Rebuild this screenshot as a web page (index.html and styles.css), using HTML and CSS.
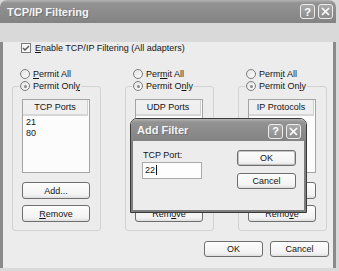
FILE: index.html
```html
<!DOCTYPE html>
<html>
<head>
    <title>TCP/IP Filtering</title>
    <link rel="stylesheet" href="styles.css">
</head>
<body>
    <div class="dlg">
        <div class="titlebar">
            <span class="title">TCP/IP Filtering</span>
            <span class="tbtn">?</span>
            <span class="tbtn"><svg width="9" height="9" viewBox="0 0 9 9"><path d="M1 1L8 8M8 1L1 8" stroke="#fff" stroke-width="1.7"/></svg></span>
        </div>
        <div class="frame">
            <div class="chkrow">
                <span class="chk"><svg width="8" height="8" viewBox="0 0 8 8"><path d="M1 4L3 6L7 2" fill="none" stroke="#555" stroke-width="1.4"/></svg></span>
                <span><u>E</u>nable TCP/IP Filtering (All adapters)</span>
            </div>
            <div class="cols">
                <div class="col">
                    <div class="opt"><span class="radio"></span><span><u>P</u>ermit All</span></div>
                    <fieldset class="group">
                        <legend class="opt"><span class="radio on"></span><span>Permit Onl<u>y</u></span></legend>
                        <div class="list">
                            <div class="lhead">TCP Ports</div>
                            <div class="item">21</div>
                            <div class="item">80</div>
                        </div>
                        <button class="btn add">Add...</button>
                        <button class="btn rem"><u>R</u>emove</button>
                    </fieldset>
                </div>
                <div class="col">
                    <div class="opt"><span class="radio"></span><span>Per<u>m</u>it All</span></div>
                    <fieldset class="group">
                        <legend class="opt"><span class="radio on"></span><span>Permit O<u>n</u>ly</span></legend>
                        <div class="list">
                            <div class="lhead">UDP Ports</div>
                        </div>
                        <button class="btn add">Add...</button>
                        <button class="btn rem">Rem<u>o</u>ve</button>
                    </fieldset>
                </div>
                <div class="col">
                    <div class="opt"><span class="radio"></span><span>Perm<u>i</u>t All</span></div>
                    <fieldset class="group">
                        <legend class="opt"><span class="radio on"></span><span>Permit On<u>l</u>y</span></legend>
                        <div class="list">
                            <div class="lhead">IP Protocols</div>
                        </div>
                        <button class="btn add">A<u>d</u>d...</button>
                        <button class="btn rem">Remo<u>v</u>e</button>
                    </fieldset>
                </div>
            </div>
            <div class="footer">
                <button class="btn small">OK</button>
                <button class="btn small">Cancel</button>
            </div>
        </div>
    </div>

    <div class="popup">
        <div class="titlebar ptitle">
            <span class="title">Add Filter</span>
            <span class="tbtn">?</span>
            <span class="tbtn"><svg width="9" height="9" viewBox="0 0 9 9"><path d="M1 1L8 8M8 1L1 8" stroke="#fff" stroke-width="1.7"/></svg></span>
        </div>
        <div class="pbody">
            <div class="pleft">
                <div class="plabel">TCP Port:</div>
                <div class="edit">22<span class="caret"></span></div>
            </div>
            <div class="pright">
                <button class="btn small def">OK</button>
                <button class="btn small cancel">Cancel</button>
            </div>
        </div>
    </div>
</body>
</html>
```

FILE: styles.css
```css
body {
    margin: 0;
    background-color: #d9d9d9;
    font-family: "Liberation Sans", Arial, sans-serif;
    font-size: 9px;
    color: #141414;
}

.dlg {
    width: 336px;
    height: 268px;
    overflow: hidden;
}

.titlebar {
    height: 23px;
    display: flex;
    align-items: center;
    gap: 3px;
    padding: 0 3px 0 7px;
    border-radius: 7px 7px 0 0;
    background: linear-gradient(#b4b4b4, #939393 3px, #8c8c8c 50%, #838383);
}

.title {
    flex: 1;
    color: #f4f4f4;
    font-size: 11px;
    font-weight: bold;
    text-shadow: 1px 1px 0 #727272;
}

.tbtn {
    width: 13px;
    height: 13px;
    display: flex;
    align-items: center;
    justify-content: center;
    border: 1px solid #ececec;
    border-radius: 3px;
    background: linear-gradient(#a9a9a9, #8d8d8d);
    color: #fff;
    font-size: 11px;
    font-weight: bold;
}

.frame {
    height: 245px;
    box-sizing: border-box;
    background-color: #ececec;
    border: 3px solid #8a8a8a;
    border-top: 0;
}

.chkrow {
    height: 12px;
    margin: 19px 0 0 18px;
    display: flex;
    align-items: center;
    gap: 4px;
}

.chk {
    width: 8px;
    height: 8px;
    border: 1px solid #7a7a7a;
    background-color: #f7f7f7;
    display: flex;
    align-items: center;
    justify-content: center;
}

.cols {
    display: grid;
    grid-template-columns: repeat(3, 89px);
    column-gap: 24px;
    margin: 14px 0 0 9px;
}

.opt {
    height: 12px;
    display: flex;
    align-items: center;
    gap: 3px;
}

.col > .opt {
    padding-left: 8px;
}

.radio {
    width: 8px;
    height: 8px;
    border: 1px solid #7c7c7c;
    border-radius: 50%;
    background: linear-gradient(135deg, #e2e2e2, #fdfdfd);
    display: flex;
    align-items: center;
    justify-content: center;
}

.radio.on::after {
    content: "";
    width: 3px;
    height: 3px;
    border-radius: 50%;
    background-color: #8a8a8a;
}

.group {
    width: 89px;
    box-sizing: border-box;
    margin: 0;
    padding: 0 0 8px 9px;
    min-inline-size: 0;
    border: 1px solid #d2d2d2;
    border-radius: 3px;
}

.group legend {
    padding: 0 1px;
    margin-left: -3px;
}

.list {
    width: 68px;
    height: 74px;
    box-sizing: border-box;
    margin-top: 7px;
    border: 1px solid #a4a4a4;
    background-color: #fcfcfc;
}

.lhead {
    height: 14px;
    line-height: 14px;
    text-align: center;
    background-color: #efefef;
    border-bottom: 2px solid #d6d6d6;
    border-right: 1px solid #cfcfcf;
    margin-right: 1px;
}

.item {
    padding-left: 3px;
    line-height: 11px;
}

.lhead + .item {
    padding-top: 1px;
}

.btn {
    display: block;
    padding: 0;
    font: inherit;
    color: #141414;
    width: 68px;
    height: 17px;
    border: 1px solid #6e6e6e;
    border-radius: 3px;
    background: linear-gradient(#fdfdfd, #f2f2f2 80%, #dedede);
}

.add {
    margin-top: 9px;
}

.rem {
    margin-top: 6px;
}

.footer {
    display: flex;
    justify-content: flex-end;
    gap: 7px;
    margin-top: 10px;
    padding-right: 4px;
}

.small {
    width: 59px;
    height: 16px;
}

.popup {
    position: absolute;
    left: 130px;
    top: 118px;
    width: 177px;
    height: 95px;
    box-sizing: border-box;
    border: 1px solid #3a3a3a;
    border-radius: 7px 7px 0 0;
    background-color: #ececec;
}

.ptitle {
    height: 22px;
    padding: 0 5px 0 6px;
    border-radius: 6px 6px 0 0;
}

.ptitle .tbtn {
    margin-top: 2px;
}

.pbody {
    height: 71px;
    box-sizing: border-box;
    border: 2px solid #7e7e7e;
    border-top: 0;
    padding: 8px 8px 0 10px;
    display: flex;
    justify-content: space-between;
}

.plabel {
    height: 12px;
    line-height: 12px;
}

.edit {
    width: 60px;
    height: 17px;
    box-sizing: border-box;
    margin: 1px 0 0 -1px;
    border: 1px solid #a9a9a9;
    background-color: #fdfdfd;
    padding: 2px 0 0 2px;
    display: flex;
}

.caret {
    width: 1px;
    height: 10px;
    background-color: #111;
    margin-left: 1px;
}

.pright {
    padding-top: 1px;
}

.def {
    box-shadow: inset 0 0 0 1px #c4c4c4;
}

.cancel {
    margin-top: 7px;
}
```
